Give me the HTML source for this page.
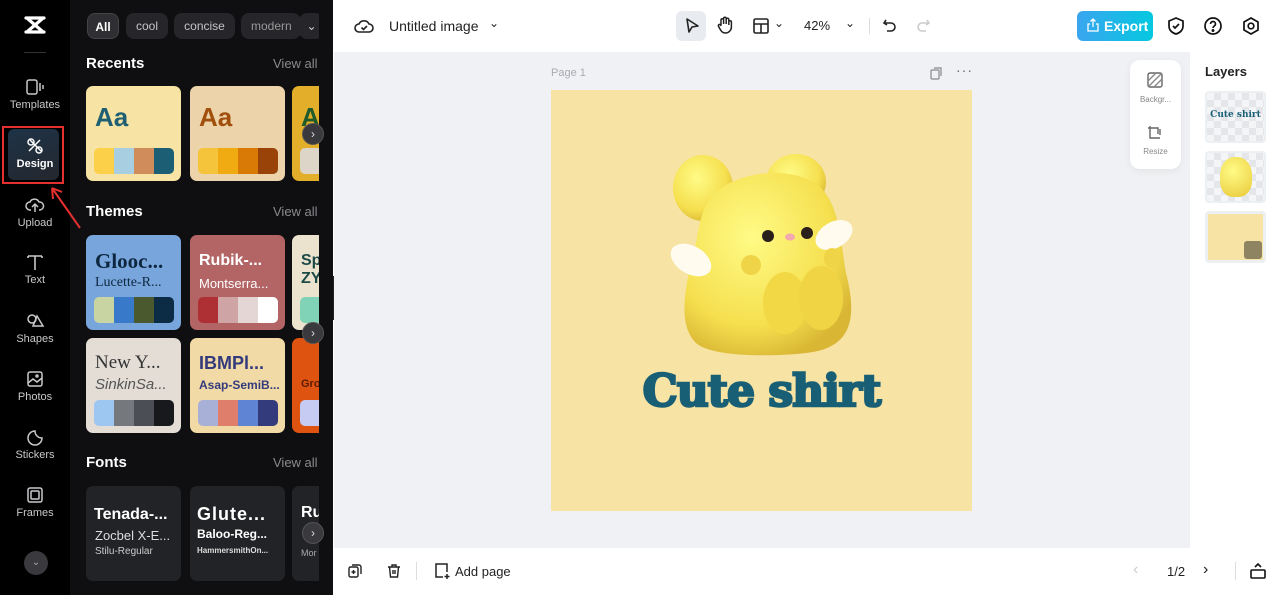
<!DOCTYPE html>
<html><head><meta charset="utf-8"><style>
*{box-sizing:border-box;margin:0;padding:0}
body{width:1280px;height:595px;overflow:hidden;font-family:"Liberation Sans",sans-serif;background:#fff;position:relative}
.abs{position:absolute}
#rail{left:0;top:0;width:70px;height:595px;background:#000}
.ri{position:absolute;left:0;width:70px;text-align:center;color:#c9c9cc;font-size:11px}
.ri svg{display:block;margin:0 auto 3px}
#panel{left:70px;top:0;width:263px;height:595px;background:#0f0f11;overflow:hidden}
.chip{position:absolute;top:13px;height:26px;border-radius:8px;background:#26262a;color:#c4c4c8;font-size:12px;line-height:26px;text-align:center}
.h{position:absolute;left:16px;color:#fff;font-weight:bold;font-size:15px}
.va{position:absolute;left:203px;color:#8a8a8e;font-size:13px}
.card{position:absolute;width:95px;height:95px;border-radius:7px;overflow:hidden}
.pal{position:absolute;left:8px;top:62px;width:80px;height:26px;border-radius:5px;overflow:hidden;display:flex}
.pal i{flex:1}
.nx{position:absolute;width:22px;height:22px;border-radius:50%;background:#3a3a3e;border:1px solid #555;color:#ddd;font-size:12px;line-height:20px;text-align:center}
.clip{position:absolute;left:0;top:0;width:249px;height:595px;overflow:hidden}
</style></head><body>
<div id="rail" class="abs">
 <svg class="abs" style="left:22px;top:15px" width="26" height="20" viewBox="0 0 26 20"><path d="M4 3h18M4 17h18M6 4l14 12M20 4L6 16" stroke="#fff" stroke-width="3.2" fill="none" stroke-linecap="round"/></svg>
 <div class="abs" style="left:24px;top:52px;width:22px;height:1px;background:#333"></div>
 <div class="ri" style="top:78px"><svg width="20" height="18" viewBox="0 0 20 18" fill="none" stroke="#c9c9cc" stroke-width="1.5"><rect x="2" y="2" width="10" height="14" rx="2"/><path d="M15 5v8M18 7v4"/></svg>Templates</div>
 <div class="abs" style="left:2px;top:126px;width:62px;height:58px;border:2px solid #e53030"></div>
 <div class="abs" style="left:8px;top:129px;width:51px;height:51px;border-radius:6px;background:linear-gradient(160deg,#1e3347,#24272e)"></div>
 <div class="ri" style="top:137px;color:#fff"><svg width="18" height="18" viewBox="0 0 18 18" fill="none" stroke="#fff" stroke-width="1.5"><path d="M4 3l11 11M14 3L3 14"/><circle cx="5" cy="5" r="3"/><circle cx="13" cy="13" r="3"/></svg><b>Design</b></div>
 <div class="ri" style="top:196px"><svg width="20" height="18" viewBox="0 0 20 18" fill="none" stroke="#c9c9cc" stroke-width="1.5"><path d="M6 14H5a4 4 0 010-8 5 5 0 019 0 4 4 0 011 8h-1M10 16V9M7 11l3-3 3 3"/></svg>Upload</div>
 <div class="ri" style="top:253px"><svg width="20" height="18" viewBox="0 0 20 18" fill="none" stroke="#c9c9cc" stroke-width="1.6"><path d="M3 3h14M10 3v14M3 3v2M17 3v2"/></svg>Text</div>
 <div class="ri" style="top:312px"><svg width="20" height="18" viewBox="0 0 20 18" fill="none" stroke="#c9c9cc" stroke-width="1.5"><circle cx="7" cy="7" r="4"/><path d="M12 4l6 10H8z"/></svg>Shapes</div>
 <div class="ri" style="top:370px"><svg width="20" height="18" viewBox="0 0 20 18" fill="none" stroke="#c9c9cc" stroke-width="1.5"><rect x="3" y="2" width="14" height="14" rx="2"/><path d="M3 13l5-4 4 3 5-4"/><circle cx="12" cy="6" r="1"/></svg>Photos</div>
 <div class="ri" style="top:428px"><svg width="20" height="18" viewBox="0 0 20 18" fill="none" stroke="#c9c9cc" stroke-width="1.5"><path d="M17 10a7 7 0 11-7-7c0 4 3 7 7 7z"/></svg>Stickers</div>
 <div class="ri" style="top:486px"><svg width="20" height="18" viewBox="0 0 20 18" fill="none" stroke="#c9c9cc" stroke-width="1.5"><rect x="3" y="2" width="14" height="14" rx="2"/><rect x="6" y="5" width="8" height="8" rx="1"/></svg>Frames</div>
 <div class="abs" style="left:24px;top:551px;width:24px;height:24px;border-radius:50%;background:#3a3a3e;color:#aaa;text-align:center;font-size:10px;line-height:24px">&#8964;</div>
</div>
<div id="panel" class="abs"><div class="clip">
 <div class="chip" style="left:17px;width:32px;background:#2e2e33;border:1px solid #444;color:#fff;font-weight:bold">All</div>
 <div class="chip" style="left:56px;width:42px">cool</div>
 <div class="chip" style="left:104px;width:61px">concise</div>
 <div class="chip" style="left:171px;width:60px;text-align:left;padding-left:10px;color:#999">modern</div>
 <div class="chip" style="left:229px;width:25px;color:#ccc">&#8964;</div>
 <div class="h" style="top:55px">Recents</div><div class="va" style="top:56px">View all</div>
 <div class="card" style="left:16px;top:86px;background:#f7e3a3"><div class="abs" style="left:9px;top:16px;font-size:26px;font-weight:bold;color:#1e5f74">Aa</div><div class="pal"><i style="background:#fdd04a"></i><i style="background:#a7cfe1"></i><i style="background:#d08c5a"></i><i style="background:#1c5f74"></i></div></div>
 <div class="card" style="left:120px;top:86px;background:#ecd3a9"><div class="abs" style="left:9px;top:16px;font-size:26px;font-weight:bold;color:#a04f0c">Aa</div><div class="pal"><i style="background:#f5c43a"></i><i style="background:#f0ab12"></i><i style="background:#d97a06"></i><i style="background:#994308"></i></div></div>
 <div class="card" style="left:222px;top:86px;background:#e3ae2a"><div class="abs" style="left:9px;top:16px;font-size:26px;font-weight:bold;color:#1f5a2a">Aa</div><div class="pal"><i style="background:#ddd5c7"></i></div></div>
 <div class="h" style="top:203px">Themes</div><div class="va" style="top:204px">View all</div>
 <div class="card" style="left:16px;top:235px;background:#78a6dc"><div class="abs" style="left:9px;top:14px;font-family:'Liberation Serif',serif;font-size:21px;font-weight:bold;color:#0d2740">Glooc...</div><div class="abs" style="left:9px;top:40px;font-family:'Liberation Serif',serif;font-size:14px;color:#0d2740">Lucette-R...</div><div class="pal"><i style="background:#c9d4a3"></i><i style="background:#3879c9"></i><i style="background:#4a5a2e"></i><i style="background:#0c2b45"></i></div></div>
 <div class="card" style="left:120px;top:235px;background:#b36566"><div class="abs" style="left:9px;top:17px;font-size:16px;font-weight:bold;color:#fff">Rubik-...</div><div class="abs" style="left:9px;top:41px;font-size:13px;color:#fff">Montserra...</div><div class="pal"><i style="background:#ae3034"></i><i style="background:#cfa4a4"></i><i style="background:#e3d6d4"></i><i style="background:#fff"></i></div></div>
 <div class="card" style="left:222px;top:235px;background:#ece3cf"><div class="abs" style="left:9px;top:17px;font-size:16px;font-weight:bold;color:#1c4a46">Sp<br>ZY</div><div class="pal"><i style="background:#80d3b6"></i></div></div>
 <div class="card" style="left:16px;top:338px;background:#e3ddd6"><div class="abs" style="left:9px;top:14px;font-family:'Liberation Serif',serif;font-size:19px;color:#333">New Y...</div><div class="abs" style="left:9px;top:38px;font-size:15px;font-style:italic;color:#555">SinkinSa...</div><div class="pal"><i style="background:#9dc6f0"></i><i style="background:#75797d"></i><i style="background:#4b4e54"></i><i style="background:#17191d"></i></div></div>
 <div class="card" style="left:120px;top:338px;background:#f2daa6"><div class="abs" style="left:9px;top:15px;font-size:18px;font-weight:bold;color:#343b7c">IBMPl...</div><div class="abs" style="left:9px;top:40px;font-size:12px;font-weight:bold;color:#343b7c">Asap-SemiB...</div><div class="pal"><i style="background:#a8b0d8"></i><i style="background:#e07e6c"></i><i style="background:#5f84d3"></i><i style="background:#343b7c"></i></div></div>
 <div class="card" style="left:222px;top:338px;background:#df5310"><div class="abs" style="left:9px;top:40px;font-size:11px;font-weight:bold;color:#5a1d00">Gro</div><div class="pal"><i style="background:#c5cbf2"></i></div></div>
 <div class="h" style="top:454px">Fonts</div><div class="va" style="top:455px">View all</div>
 <div class="card" style="left:16px;top:486px;background:#222326"><div class="abs" style="left:8px;top:20px;font-size:16px;font-weight:bold;color:#fff">Tenada-...</div><div class="abs" style="left:9px;top:42px;font-size:13px;color:#ddd">Zocbel X-E...</div><div class="abs" style="left:9px;top:60px;font-size:10px;color:#ccc">Stilu-Regular</div></div>
 <div class="card" style="left:120px;top:486px;background:#222326"><div class="abs" style="left:7px;top:18px;font-size:18px;font-weight:bold;color:#fff;letter-spacing:1px">Glute...</div><div class="abs" style="left:7px;top:41px;font-size:12px;font-weight:bold;color:#fff">Baloo-Reg...</div><div class="abs" style="left:7px;top:60px;font-size:8px;font-weight:bold;color:#ddd">HammersmithOn...</div></div>
 <div class="card" style="left:222px;top:486px;background:#222326"><div class="abs" style="left:9px;top:18px;font-size:16px;font-weight:bold;color:#fff">Ru</div><div class="abs" style="left:9px;top:62px;font-size:9px;color:#aaa">Mor</div></div>
</div>
 <div class="nx" style="left:232px;top:123px">›</div>
 <div class="nx" style="left:232px;top:322px">›</div>
 <div class="nx" style="left:232px;top:522px">›</div>
</div>
<svg class="abs" style="left:44px;top:178px" width="40" height="54"><path d="M36 50L8 10M8 10l1 11M8 10l10 4" stroke="#e53030" stroke-width="2" fill="none"/></svg>
<div class="abs" style="left:333px;top:276px;width:7px;height:44px;background:#222;border-radius:0 5px 5px 0"></div>
<!-- top bar -->
<div class="abs" style="left:340px;top:0;width:940px;height:52px;background:#fff"></div>
<svg class="abs" style="left:354px;top:16px" width="20" height="20" viewBox="0 0 20 20" fill="none" stroke="#222" stroke-width="1.6"><path d="M6 16H5a4 4 0 010-8 5.5 5.5 0 0110 0 4 4 0 010 8H6z"/><path d="M7.5 11.5l2 2 3.5-3.5"/></svg>
<div class="abs" style="left:389px;top:18px;font-size:14px;color:#222">Untitled image</div>
<div class="abs" style="left:489px;top:16px;font-size:12px;color:#222">&#8964;</div>
<div class="abs" style="left:676px;top:11px;width:30px;height:30px;border-radius:6px;background:#e8ebef"></div>
<svg class="abs" style="left:683px;top:16px" width="18" height="20" viewBox="0 0 18 20"><path d="M4 3l11 7-6 1-3 5z" fill="none" stroke="#222" stroke-width="1.6" stroke-linejoin="round"/></svg>
<svg class="abs" style="left:715px;top:15px" width="20" height="20" viewBox="0 0 20 20" fill="none" stroke="#222" stroke-width="1.5"><path d="M6 10V5a1.3 1.3 0 012.6 0v4M8.6 9V3.5a1.3 1.3 0 012.6 0V9M11.2 9V4.5a1.3 1.3 0 012.6 0V10M13.8 10V7a1.3 1.3 0 012.6 0v5a6 6 0 01-6 6c-3 0-4-1.5-6-5l-1-2a1.3 1.3 0 012.2-1.2L6 11"/></svg>
<svg class="abs" style="left:752px;top:17px" width="18" height="18" viewBox="0 0 18 18" fill="none" stroke="#222" stroke-width="1.6"><rect x="2" y="2" width="14" height="14" rx="1.5"/><path d="M2 7h14M9 7v9"/></svg>
<div class="abs" style="left:774px;top:16px;font-size:12px;color:#222">&#8964;</div>
<div class="abs" style="left:804px;top:18px;font-size:13px;color:#222">42%</div>
<div class="abs" style="left:845px;top:16px;font-size:12px;color:#222">&#8964;</div>
<div class="abs" style="left:869px;top:18px;width:1px;height:16px;background:#ddd"></div>
<svg class="abs" style="left:881px;top:17px" width="18" height="18" viewBox="0 0 18 18" fill="none" stroke="#222" stroke-width="1.6"><path d="M5 3L3 6l3 2M3 6h7a4 4 0 010 8H6"/></svg>
<svg class="abs" style="left:914px;top:17px" width="18" height="18" viewBox="0 0 18 18" fill="none" stroke="#ccc" stroke-width="1.6"><path d="M13 3l2 3-3 2M15 6H8a4 4 0 000 8h4"/></svg>
<div class="abs" style="left:1077px;top:11px;width:76px;height:30px;border-radius:6px;background:linear-gradient(90deg,#3aa5ef,#04c8e0);color:#fff;font-weight:bold;font-size:14px;line-height:30px;padding-left:27px">Export</div>
<svg class="abs" style="left:1086px;top:18px" width="14" height="14" viewBox="0 0 14 14" fill="none" stroke="#fff" stroke-width="1.3"><path d="M4 6H2v7h10V6h-2M7 9V1M4.5 3.5L7 1l2.5 2.5"/></svg>
<svg class="abs" style="left:1166px;top:16px" width="20" height="20" viewBox="0 0 20 20" fill="none" stroke="#111" stroke-width="1.7"><path d="M10 2l7 3v5c0 4-3 7-7 8-4-1-7-4-7-8V5z"/><path d="M7 10l2 2 4-4"/></svg>
<svg class="abs" style="left:1203px;top:16px" width="20" height="20" viewBox="0 0 20 20" fill="none" stroke="#111" stroke-width="1.7"><circle cx="10" cy="10" r="8"/><path d="M7.5 8a2.5 2.5 0 115 0c0 2-2.5 2-2.5 4"/><circle cx="10" cy="14.5" r=".6" fill="#111"/></svg>
<svg class="abs" style="left:1241px;top:16px" width="20" height="20" viewBox="0 0 20 20" fill="none" stroke="#111" stroke-width="1.7"><path d="M10 2l7 4v8l-7 4-7-4V6z"/><circle cx="10" cy="10" r="2.8"/></svg>
<!-- canvas -->
<div class="abs" style="left:334px;top:52px;width:856px;height:496px;background:#eff1f4"></div>
<div class="abs" style="left:551px;top:67px;font-size:11px;color:#a8abb0">Page 1</div>
<svg class="abs" style="left:930px;top:67px" width="13" height="13" viewBox="0 0 13 13" fill="none" stroke="#888" stroke-width="1.2"><rect x="1" y="3" width="8" height="9" rx="1"/><path d="M4 1h7v8"/></svg>
<div class="abs" style="left:956px;top:62px;font-size:14px;color:#666;letter-spacing:1px">···</div>
<div class="abs" style="left:551px;top:90px;width:421px;height:421px;background:#f7e3a3"></div>
<svg class="abs" style="left:551px;top:140px" width="421" height="230" viewBox="0 0 421 230">
 <defs><radialGradient id="g" cx="40%" cy="35%" r="70%"><stop offset="0" stop-color="#fffb86"/><stop offset=".7" stop-color="#f5df4e"/><stop offset="1" stop-color="#d9b634"/></radialGradient></defs>
 <ellipse cx="152" cy="48" rx="30" ry="33" fill="url(#g)"/>
 <ellipse cx="245" cy="42" rx="30" ry="28" fill="url(#g)"/>
 <path d="M170 48c30-20 80-20 100 0 20 20 20 60 25 85 10 40 10 75-40 80-35 4-95 4-110-10-20-20-10-60 0-100 5-30 10-45 25-55z" fill="url(#g)"/>
 <ellipse cx="140" cy="120" rx="22" ry="14" fill="#fffbef" transform="rotate(30 140 120)"/>
 <ellipse cx="283" cy="95" rx="20" ry="13" fill="#fffbef" transform="rotate(-30 283 95)"/>
 <circle cx="217" cy="96" r="6" fill="#2a1f1a"/><circle cx="256" cy="93" r="6" fill="#2a1f1a"/>
 <ellipse cx="239" cy="97" rx="5" ry="3.5" fill="#f3a8b0"/>
 <ellipse cx="200" cy="125" rx="10" ry="10" fill="#f0d447"/><ellipse cx="281" cy="118" rx="8" ry="10" fill="#f0d447"/>
 <ellipse cx="234" cy="163" rx="22" ry="31" fill="#f3d845"/><ellipse cx="270" cy="158" rx="22" ry="32" fill="#f0d444"/>
</svg>
<div class="abs" style="left:551px;top:366px;width:421px;text-align:center;font-family:'DejaVu Serif','Liberation Serif',serif;font-weight:bold;font-size:44px;color:#185f76;letter-spacing:-1px;-webkit-text-stroke:2.5px #185f76">Cute shirt</div>
<div class="abs" style="left:1130px;top:60px;width:51px;height:109px;border-radius:10px;background:#fff;box-shadow:0 2px 8px rgba(0,0,0,.06)"></div>
<svg class="abs" style="left:1147px;top:72px" width="16" height="16" viewBox="0 0 16 16"><rect x="1" y="1" width="14" height="14" rx="2" fill="none" stroke="#666" stroke-width="1.4"/><path d="M1 9l8-8M1 15L15 1M7 15l8-8" stroke="#888" stroke-width="1.4"/></svg>
<div class="abs" style="left:1130px;top:95px;width:51px;text-align:center;font-size:8px;color:#888">Backgr...</div>
<svg class="abs" style="left:1147px;top:125px" width="16" height="16" viewBox="0 0 16 16" fill="none" stroke="#666" stroke-width="1.4"><path d="M3 1v12h10M1 3h10v6M13 4v6"/></svg>
<div class="abs" style="left:1130px;top:147px;width:51px;text-align:center;font-size:8px;color:#888">Resize</div>
<!-- layers -->
<div class="abs" style="left:1205px;top:64px;font-size:13px;font-weight:bold;color:#222">Layers</div>
<div class="abs" style="left:1205px;top:91px;width:61px;height:52px;border-radius:4px;background:repeating-conic-gradient(#e4e6ea 0 25%,#f4f5f7 0 50%) 0 0/14px 14px;border:2px solid #edf0f3"></div>
<div class="abs" style="left:1205px;top:110px;width:61px;text-align:center;font-family:'DejaVu Serif',serif;font-weight:bold;font-size:9px;color:#185f76">Cute shirt</div>
<div class="abs" style="left:1205px;top:151px;width:61px;height:52px;border-radius:4px;background:repeating-conic-gradient(#e4e6ea 0 25%,#f4f5f7 0 50%) 0 0/14px 14px;border:2px solid #edf0f3"></div>
<div class="abs" style="left:1220px;top:157px;width:32px;height:40px;border-radius:45% 45% 40% 40%;background:radial-gradient(circle at 40% 35%,#fffb86,#e8c938)"></div>
<div class="abs" style="left:1205px;top:211px;width:61px;height:52px;border-radius:4px;background:#f7e3a3;border:3px solid #edf0f3"></div>
<div class="abs" style="left:1244px;top:241px;width:18px;height:18px;border-radius:3px;background:#8e8462"></div>
<!-- bottom bar -->
<div class="abs" style="left:334px;top:548px;width:946px;height:47px;background:#fff"></div>
<svg class="abs" style="left:347px;top:563px" width="16" height="16" viewBox="0 0 16 16" fill="none" stroke="#222" stroke-width="1.4"><rect x="2" y="4" width="9" height="10" rx="1.5"/><path d="M5 2h7a2 2 0 012 2v7M6.5 7v4M4.5 9h4"/></svg>
<svg class="abs" style="left:386px;top:563px" width="16" height="16" viewBox="0 0 16 16" fill="none" stroke="#222" stroke-width="1.4"><path d="M2 4h12M6 4V2h4v2M3.5 4l1 10h7l1-10M7 7v4M9 7v4"/></svg>
<div class="abs" style="left:416px;top:562px;width:1px;height:18px;background:#ddd"></div>
<svg class="abs" style="left:433px;top:562px" width="18" height="18" viewBox="0 0 18 18" fill="none" stroke="#222" stroke-width="1.5"><path d="M10 15H3V2h11v8M14 12v5M11.5 14.5h5"/></svg>
<div class="abs" style="left:455px;top:564px;font-size:13px;color:#222">Add page</div>
<div class="abs" style="left:1133px;top:561px;font-size:16px;color:#ccc">‹</div>
<div class="abs" style="left:1167px;top:564px;font-size:13px;color:#222">1/2</div>
<div class="abs" style="left:1203px;top:561px;font-size:16px;color:#222">›</div>
<div class="abs" style="left:1235px;top:562px;width:1px;height:18px;background:#ddd"></div>
<svg class="abs" style="left:1249px;top:562px" width="18" height="18" viewBox="0 0 18 18" fill="none" stroke="#111" stroke-width="1.6"><rect x="2" y="8" width="14" height="8" rx="1"/><path d="M6 5l3-3 3 3"/></svg>
</body></html>
